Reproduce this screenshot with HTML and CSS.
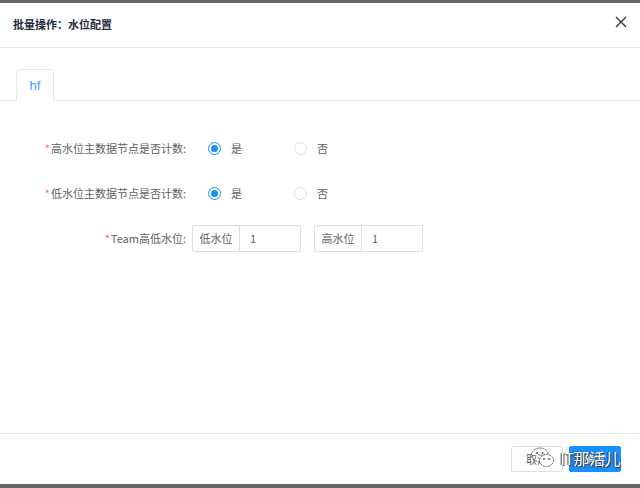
FILE: index.html
```html
<!DOCTYPE html>
<html lang="zh">
<head>
<meta charset="utf-8">
<link rel="stylesheet" href="styles.css">
</head>
<body>
<div class="page">
  <div class="topbar"></div>
  <div class="dialog">
    <div class="header">
      <span class="title">批量操作：水位配置</span>
      <svg class="close" width="12" height="12" viewBox="0 0 12 12"><path d="M1 1L11 11M11 1L1 11" stroke="#303133" stroke-width="1.3" fill="none"/></svg>
    </div>
    <div class="body">
      <div class="tabs">
        <div class="tab">hf</div>
      </div>
      <div class="form">
        <div class="row">
          <div class="label"><span class="req">*</span>高水位主数据节点是否计数:</div>
          <div class="radios">
            <label class="radio"><span class="dot on"></span><span>是</span></label>
            <label class="radio"><span class="dot"></span><span>否</span></label>
          </div>
        </div>
        <div class="row">
          <div class="label"><span class="req">*</span>低水位主数据节点是否计数:</div>
          <div class="radios">
            <label class="radio"><span class="dot on"></span><span>是</span></label>
            <label class="radio"><span class="dot"></span><span>否</span></label>
          </div>
        </div>
        <div class="row">
          <div class="label"><span class="req">*</span>Team高低水位:</div>
          <div class="inputs">
            <div class="group"><span class="pre">低水位</span><span class="val">1</span></div>
            <div class="group"><span class="pre">高水位</span><span class="val">1</span></div>
          </div>
        </div>
      </div>
    </div>
    <div class="footer">
      <button class="btn cancel">取消</button>
      <button class="btn ok">确定</button>
      <div class="wm"><svg width="26" height="22" viewBox="0 0 26 22"><ellipse cx="10" cy="8" rx="8.5" ry="7" fill="none" stroke="#555" stroke-width="1" stroke-dasharray="2 1"/><ellipse cx="16.5" cy="13.5" rx="7" ry="6" fill="#fff" stroke="#555" stroke-width="1" stroke-dasharray="2 1"/><circle cx="7" cy="6" r="1" fill="#555"/><circle cx="12.5" cy="6" r="1" fill="#555"/><circle cx="14" cy="12" r="0.9" fill="#555"/><circle cx="19" cy="12" r="0.9" fill="#555"/></svg><span class="wmtext">IT那活儿</span></div>
    </div>
  </div>
  <div class="bottombar"></div>
</div>
</body>
</html>
```
FILE: styles.css
```css
* { box-sizing: border-box; }
html, body { margin: 0; padding: 0; }
body {
  font-family: "Noto Sans CJK SC", "Noto Sans", sans-serif;
  font-size: 11px;
  color: #606266;
  background: #fff;
}
.page { height: 488px; display: flex; flex-direction: column; }
.topbar { height: 3px; background: #666; }
.bottombar { height: 4px; background: #666; }
.dialog { flex: 1; display: flex; flex-direction: column; background: #fff; }
.header {
  height: 45px;
  border-bottom: 1px solid #e4e7ed;
  display: flex;
  align-items: center;
  justify-content: space-between;
  padding: 0 13px 2px 13px;
}
.title { font-size: 11px; font-weight: 700; color: #1f2d3d; }
.close { margin-top: -4px; }
.body { flex: 1; }
.tabs {
  margin-top: 21px;
  border-bottom: 1px solid #e4e7ed;
  padding-left: 16px;
  display: flex;
  height: 32px;
}
.tab {
  width: 38px;
  height: 32px;
  border: 1px solid #e4e7ed;
  border-bottom-color: #fff;
  border-radius: 4px 4px 0 0;
  color: #409eff;
  font-family: "Liberation Sans", sans-serif;
  font-size: 13px;
  display: flex;
  align-items: center;
  justify-content: center;
  padding-top: 1px;
}
.form { padding-top: 34px; }
.row { display: flex; align-items: center; height: 26px; margin-bottom: 19px; }
.label {
  width: 192px;
  text-align: right;
  padding-right: 6px;
  color: #606266;
  white-space: nowrap;
}
.req { color: #f56c6c; margin-right: 1px; }
.radios { display: flex; padding-left: 16px; }
.radio { display: flex; align-items: center; width: 86px; color: #606266; }
.dot {
  width: 13px; height: 13px;
  border: 1px solid #dcdfe6;
  border-radius: 50%;
  margin-right: 10px;
  position: relative;
  background: #fff;
}
.dot.on { border-color: #1890ff; }
.dot.on::after {
  content: "";
  position: absolute;
  left: 2px; top: 2px;
  width: 7px; height: 7px;
  border-radius: 50%;
  background: #1890ff;
}
.inputs { display: flex; gap: 13px; }
.group { display: flex; height: 27px; border: 1px solid #dcdfe6; border-radius: 2px; }
.pre {
  width: 47px;
  border-right: 1px solid #dcdfe6;
  display: flex; align-items: center; justify-content: center;
  color: #606266;
}
.val { width: 60px; display: flex; align-items: center; padding-left: 10px; color: #606266; }
.footer {
  height: 51px;
  border-top: 1px solid #e4e7ed;
  display: flex;
  justify-content: flex-end;
  align-items: flex-start;
  padding: 12px 19px 0 0;
  gap: 6px;
  position: relative;
}
.btn {
  width: 52px; height: 26px;
  border-radius: 2px;
  font-family: "Noto Sans CJK SC", sans-serif;
  font-size: 11px;
  padding: 0;
}
.cancel { background: #fff; border: 1px solid #dcdfe6; color: #606266; }
.ok { background: #1890ff; border: 1px solid #1890ff; color: #fff; }
.wm {
  position: absolute;
  right: 20px;
  top: 12px;
  display: flex;
  align-items: center;
  gap: 4px;
}
.wmtext {
  color: #fff;
  font-size: 16px;
  text-shadow: 1px 1px 1px #333, -1px 0 1px #333;
  letter-spacing: -0.5px;
}
```
